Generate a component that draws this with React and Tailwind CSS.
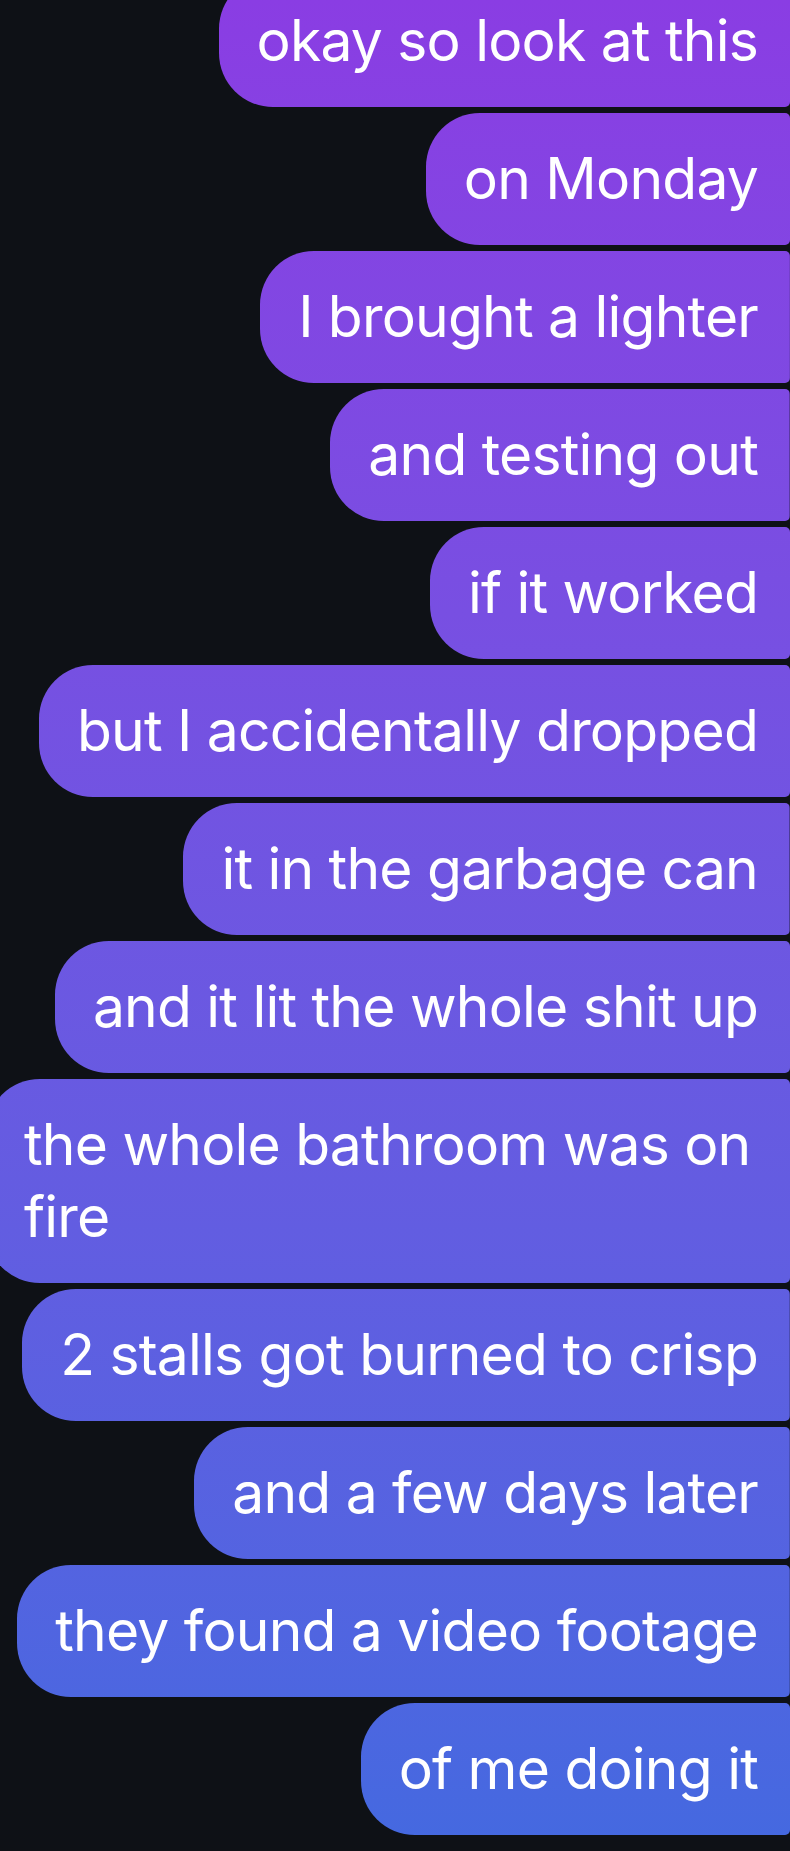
const messages = [
  "okay so look at this",
  "on Monday",
  "I brought a lighter",
  "and testing out",
  "if it worked",
  "but I accidentally dropped",
  "it in the garbage can",
  "and it lit the whole shit up",
  "the whole bathroom was on fire",
  "2 stalls got burned to crisp",
  "and a few days later",
  "they found a video footage",
  "of me doing it",
];

function Bubble({ text }) {
  return (
    <div className="shrink-0 rounded-l-[54px] rounded-r-[5px] bg-fixed bg-linear-to-b from-[#8a3de3] to-[#4469e0] pl-[38px] pr-[32px] py-[30px] text-[57px] leading-[72px] tracking-[-0.8px] text-white">
      {text}
    </div>
  );
}

export default function App() {
  return (
    <div
      className="h-screen overflow-hidden bg-[#0e1116] flex flex-col justify-end pb-[16px]"
      style={{ fontFamily: "Inter, 'Noto Sans', sans-serif" }}
    >
      <div className="-ml-[14px] flex flex-col items-end gap-[6px]">
        {messages.map((m, i) => (
          <Bubble key={i} text={m} />
        ))}
      </div>
    </div>
  );
}
